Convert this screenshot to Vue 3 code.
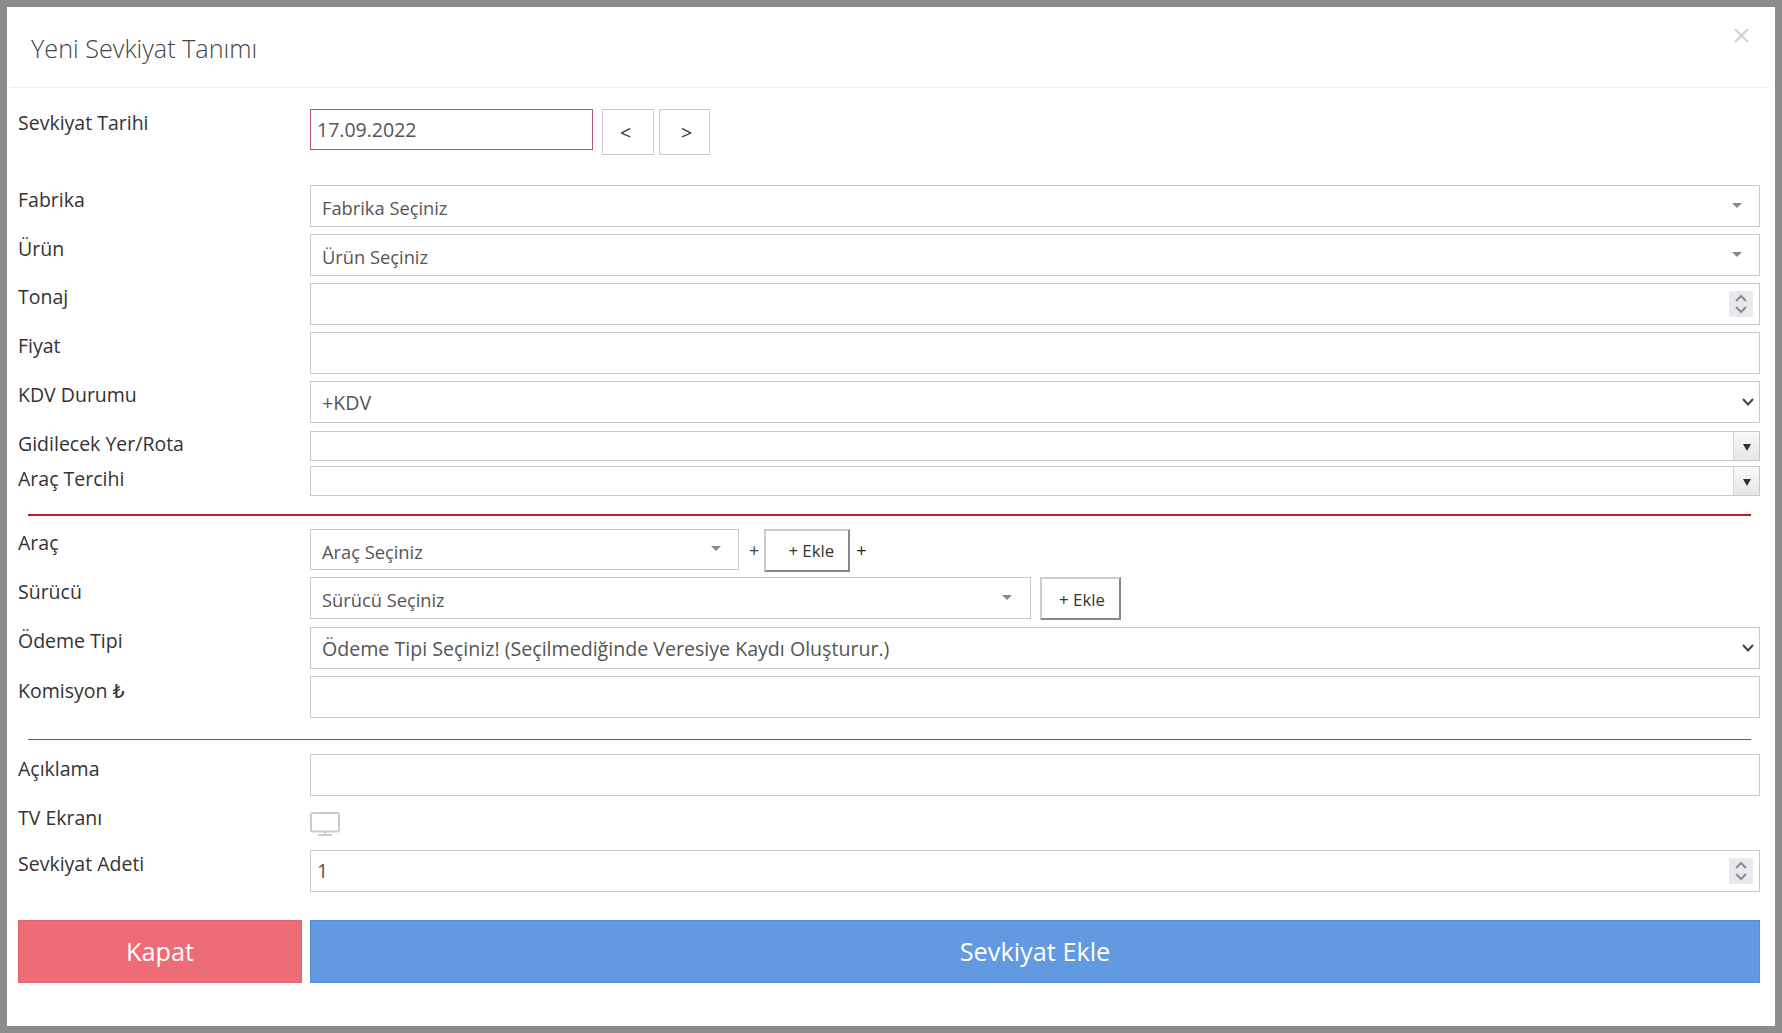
<script setup>
const chevrons = 'M1 7 L6 2 L11 7 M1 13 L6 18 L11 13'
</script>

<template>
  <main class="modal">
    <header class="head">
      <h1 class="title">Yeni Sevkiyat Tanımı</h1>
      <svg class="close" width="15" height="15" viewBox="0 0 15 15" aria-label="Kapat">
        <path d="M1 1 L14 14 M14 1 L1 14" />
      </svg>
    </header>

    <form class="body" @submit.prevent>
      <div class="row row-date">
        <label>Sevkiyat Tarihi</label>
        <div class="inline date-line">
          <input class="ctl date" value="17.09.2022" />
          <button type="button" class="nav nav-prev">&lt;</button>
          <button type="button" class="nav nav-next">&gt;</button>
        </div>
      </div>

      <div class="row">
        <label class="low">Fabrika</label>
        <div class="s2"><span>Fabrika Seçiniz</span><i class="tri"></i></div>
      </div>
      <div class="row gap7">
        <label class="low">Ürün</label>
        <div class="s2"><span>Ürün Seçiniz</span><i class="tri"></i></div>
      </div>
      <div class="row gap7">
        <label>Tonaj</label>
        <div class="ctl number">
          <span class="spin">
            <svg width="12" height="20" viewBox="0 0 12 20"><path :d="chevrons" /></svg>
          </span>
        </div>
      </div>
      <div class="row gap7">
        <label>Fiyat</label>
        <input class="ctl" />
      </div>
      <div class="row gap7">
        <label>KDV Durumu</label>
        <div class="sel-wrap">
          <select class="ctl sel"><option>+KDV</option></select>
          <svg class="sel-arrow" width="12" height="8" viewBox="0 0 12 8"><path d="M1 1 L6 6.500 L11 1" /></svg>
        </div>
      </div>

      <div class="row combo-row gap8">
        <label>Gidilecek Yer/Rota</label>
        <div class="combo">
          <input class="combo-in" />
          <span class="combo-btn"><svg width="8" height="7" viewBox="0 0 8 7"><path d="M0 0 H8 L4 7 Z" /></svg></span>
        </div>
      </div>
      <div class="row combo-row gap5">
        <label>Araç Tercihi</label>
        <div class="combo">
          <input class="combo-in" />
          <span class="combo-btn"><svg width="8" height="7" viewBox="0 0 8 7"><path d="M0 0 H8 L4 7 Z" /></svg></span>
        </div>
      </div>

      <hr class="rule rule-thick" />

      <div class="row">
        <label>Araç</label>
        <div class="inline">
          <div class="s2 s2-arac"><span>Araç Seçiniz</span><i class="tri"></i></div>
          <span class="plus plus-a">+</span>
          <button type="button" class="ekle ekle-a">+ Ekle</button>
          <span class="plus plus-b">+</span>
        </div>
      </div>
      <div class="row gap5">
        <label class="low">Sürücü</label>
        <div class="inline">
          <div class="s2 s2-surucu"><span>Sürücü Seçiniz</span><i class="tri"></i></div>
          <button type="button" class="ekle ekle-b">+ Ekle</button>
        </div>
      </div>
      <div class="row gap6">
        <label>Ödeme Tipi</label>
        <div class="sel-wrap">
          <select class="ctl sel"><option>Ödeme Tipi Seçiniz! (Seçilmediğinde Veresiye Kaydı Oluşturur.)</option></select>
          <svg class="sel-arrow" width="12" height="8" viewBox="0 0 12 8"><path d="M1 1 L6 6.500 L11 1" /></svg>
        </div>
      </div>
      <div class="row gap7">
        <label class="low">Komisyon <span class="lira">₺</span></label>
        <input class="ctl" />
      </div>

      <hr class="rule rule-thin" />

      <div class="row">
        <label class="low">Açıklama</label>
        <input class="ctl" />
      </div>
      <div class="row tv-row">
        <label class="low">TV Ekranı</label>
        <svg class="tv" width="30" height="24" viewBox="0 0 30 24">
          <rect x="1" y="1" width="28" height="18.500" rx="2" />
          <path d="M15 20 V23 M8 23 H22" />
        </svg>
      </div>
      <div class="row">
        <label>Sevkiyat Adeti</label>
        <div class="ctl number">
          <span class="num-val">1</span>
          <span class="spin">
            <svg width="12" height="20" viewBox="0 0 12 20"><path :d="chevrons" /></svg>
          </span>
        </div>
      </div>

      <div class="actions">
        <button type="button" class="act act-close">Kapat</button>
        <button type="submit" class="act act-save">Sevkiyat Ekle</button>
      </div>
    </form>
  </main>
</template>

<style>
html, body { background: #8c8c8c; }
</style>

<style scoped>
.modal {
  box-sizing: border-box;
  width: 1768px;
  height: 1019px;
  margin: 7px;
  background: #fff;
  font-family: "Open Sans", "Noto Sans", sans-serif;
  color: #333;
}
.head {
  box-sizing: border-box;
  height: 81px;
  margin: 0 6px 0 3px;
  padding: 0 20px 0 21px;
  border-bottom: 1px solid #eee;
  display: flex;
  justify-content: space-between;
  align-items: flex-start;
}
.title {
  margin: 24px 0 0;
  font-size: 25.200px;
  line-height: 34px;
  font-weight: 300;
  color: #444;
}
.close { margin-top: 21px; }
.close path { stroke: #d0d0d0; stroke-width: 2; fill: none; }
.body { padding: 21px 15px 0 11px; }
.row {
  display: grid;
  grid-template-columns: 292px 1fr;
  align-items: start;
}
.row label {
  font-size: 19.500px;
  line-height: 27px;
  color: #333;
}
.row label.low { padding-top: 1px; }
.lira { font-family: "DejaVu Sans", sans-serif; font-size: 19px; font-weight: 400; }
.row-date { height: 76px; }
.gap5 { margin-top: 5px; }
.gap6 { margin-top: 7px; }
.gap7 { margin-top: 7px; }
.gap8 { margin-top: 8px; }

.inline { display: flex; align-items: flex-start; }
.ctl {
  box-sizing: border-box;
  display: block;
  width: 100%;
  height: 42px;
  border: 1px solid #c8c8cc;
  border-radius: 0;
  background: #fff;
  font-family: inherit;
  font-size: 19.500px;
  color: #555;
  padding: 0 11px;
  outline: none;
}
.date {
  width: 283px;
  height: 41px;
  padding: 0 6px;
  border-color: #b8566c;
}
.nav {
  box-sizing: border-box;
  width: 52px;
  height: 46px;
  margin-left: 9px;
  padding: 0;
  background: #fff;
  border: 1px solid #c8c8c8;
  font-family: inherit;
  font-size: 19.500px;
  color: #333;
}
.nav-prev { padding-right: 5px; }
.nav-next { width: 51px; margin-left: 5px; padding-left: 4px; }

.s2 {
  box-sizing: border-box;
  height: 42px;
  border: 1px solid #c8c8cc;
  padding: 3px 17px 0 11px;
  display: flex;
  justify-content: space-between;
  align-items: center;
  font-size: 18.300px;
  color: #555;
}
.tri {
  width: 0;
  height: 0;
  margin-top: -5px;
  border-left: 5px solid transparent;
  border-right: 5px solid transparent;
  border-top: 5px solid #888;
}
.s2-arac { width: 429px; height: 41px; }
.s2-surucu { width: 721px; padding-right: 18px; }

.number { display: flex; align-items: center; justify-content: space-between; }
.num-val { margin-left: -5px; padding-bottom: 2px; }
.spin {
  margin-left: auto;
  margin-right: -5px;
  width: 24px;
  height: 26px;
  background: #e9e9ed;
  display: flex;
  align-items: center;
  justify-content: center;
}
.spin path { stroke: #8a8a90; stroke-width: 2; fill: none; }

.sel-wrap { position: relative; }
.sel {
  padding-left: 11px;
  font-size: 19.600px;
  appearance: none;
  -webkit-appearance: none;
}
.sel-arrow { position: absolute; top: 17px; right: 6px; pointer-events: none; }
.sel-arrow path { stroke: #444; stroke-width: 2; fill: none; }

.combo-row label { line-height: 26px; }
.combo {
  box-sizing: border-box;
  height: 30px;
  border: 1px solid #c8c8c8;
  display: flex;
}
.combo-in { flex: 1; border: 0; min-width: 0; outline: none; background: #fff; }
.combo-btn {
  width: 25px;
  border-left: 1px solid #d4d4d4;
  background: linear-gradient(#f9f9f9, #e6e6e6);
  display: flex;
  align-items: center;
  justify-content: center;
  padding-top: 2px;
}
.combo-btn path { fill: #333; }

.rule { border: 0; margin: 0 0 0 10px; width: 1723px; }
.rule-thick { height: 2px; background: #b8222a; margin-top: 18px; margin-bottom: 13px; }
.rule-thin { height: 1px; background: #c8323a; margin-top: 21px; margin-bottom: 14px; }

.plus { font-size: 18px; line-height: 43px; color: #444; }
.plus-a { margin-left: 10px; }
.plus-b { margin-left: 6px; color: #222; }
.ekle {
  box-sizing: border-box;
  height: 43px;
  padding: 0;
  background: #fff;
  border-style: solid;
  border-width: 2px;
  border-color: #ccc #888 #888 #ccc;
  font-family: inherit;
  font-size: 16.800px;
  color: #333;
}
.ekle-a { width: 86px; margin-left: 5px; padding-left: 8px; }
.ekle-b { width: 81px; margin-left: 9px; padding-left: 3px; padding-top: 1px; }

.tv-row { margin-top: 7px; height: 47px; }
.tv { margin-top: 9px; }
.tv rect, .tv path { fill: none; stroke: #ccc; stroke-width: 2; }

.actions {
  margin-top: 28px;
  display: grid;
  grid-template-columns: 284px 1fr;
  column-gap: 8px;
}
.act {
  box-sizing: border-box;
  height: 63px;
  padding: 0 0 1px;
  font-family: inherit;
  font-size: 25.300px;
  color: #fff;
}
.act-close { background: #ee6c76; border: 1px solid #e2636d; }
.act-save { background: #6399e0; border: 1px solid #5b8fd4; }
</style>
